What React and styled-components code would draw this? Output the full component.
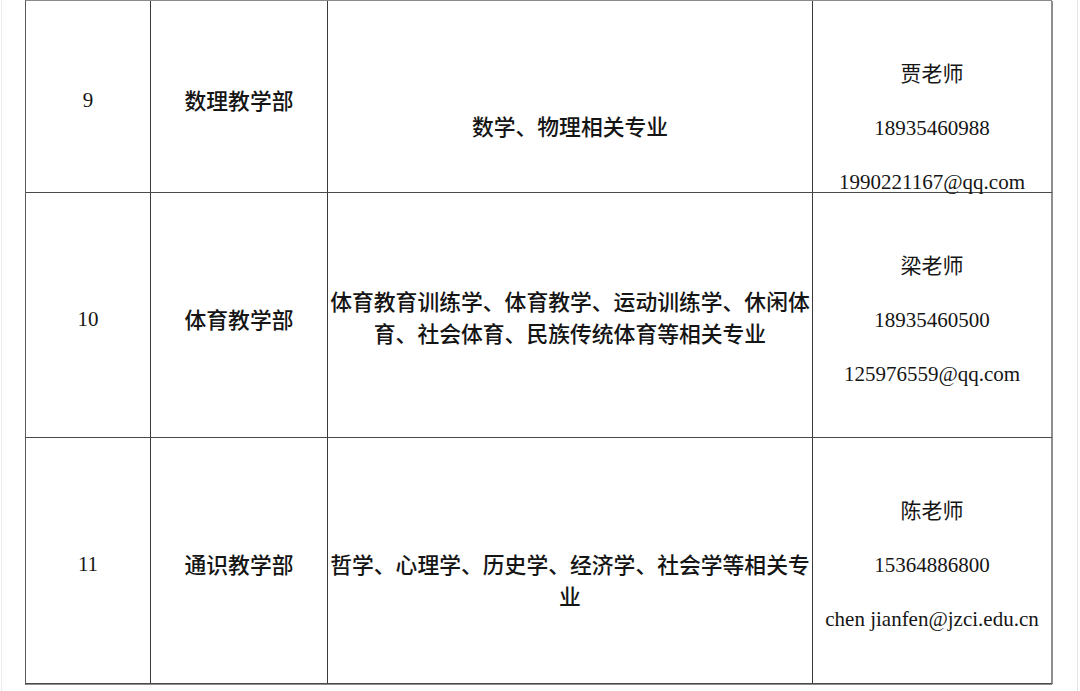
import React from 'react';
import styled, { createGlobalStyle } from 'styled-components';

const GlobalStyle = createGlobalStyle`
  html, body {
    margin: 0;
    padding: 0;
    background: #ffffff;
  }
  body {
    font-family: "Liberation Serif", "Noto Sans CJK SC", serif;
    color: #151515;
  }
`;

const rows = [
  {
    no: '9',
    dept: '数理教学部',
    major: '数学、物理相关专业',
    teacher: '贾老师',
    phone: '18935460988',
    email: '1990221167@qq.com',
    shift: { no: 3, major: 29, contact: 31 },
  },
  {
    no: '10',
    dept: '体育教学部',
    major: '体育教育训练学、体育教学、运动训练学、休闲体育、社会体育、民族传统体育等相关专业',
    teacher: '梁老师',
    phone: '18935460500',
    email: '125976559@qq.com',
    shift: { no: 4, major: 2, contact: 5 },
  },
  {
    no: '11',
    dept: '通识教学部',
    major: '哲学、心理学、历史学、经济学、社会学等相关专业',
    teacher: '陈老师',
    phone: '15364886800',
    email: 'chen jianfen@jzci.edu.cn',
    shift: { no: 3, major: 19, contact: 4 },
  },
];

const heights = [192, 245, 246];

const App = () => {
  return (
    <>
      <GlobalStyle />
      <Page>
        <Sheet>
          <Table>
            {rows.map((row, i) => (
              <React.Fragment key={row.no}>
                <Cell $h={heights[i]} $shift={row.shift.no}>
                  <Num>{row.no}</Num>
                </Cell>
                <Cell $h={heights[i]} $shift={row.shift.no}>
                  <Text>{row.dept}</Text>
                </Cell>
                <Cell $h={heights[i]} $shift={row.shift.major}>
                  <Major>{row.major}</Major>
                </Cell>
                <Cell $h={heights[i]} $shift={row.shift.contact} $last>
                  <Contact>
                    <Line>{row.teacher}</Line>
                    <Line>{row.phone}</Line>
                    <Line>{row.email}</Line>
                  </Contact>
                </Cell>
              </React.Fragment>
            ))}
          </Table>
        </Sheet>
      </Page>
    </>
  );
};

const Page = styled.div`
  width: 1080px;
  height: 691px;
  overflow: hidden;
  background: #ffffff;
  padding-left: 1px;
  box-sizing: border-box;
`;

const Sheet = styled.div`
  width: 1077px;
  height: 691px;
  box-sizing: border-box;
  border-left: 1px solid #ececec;
  border-right: 1px solid #e4e4e4;
  padding-left: 23px;
`;

const Table = styled.div`
  display: grid;
  grid-template-columns: 125px 177px 485px 240px;
  width: 1027px;
  box-sizing: border-box;
  border-left: 1px solid #5a5a5a;
  border-top: 1px solid #8a8a8a;
  border-bottom: 1px solid #8c8c8c;
`;

const Cell = styled.div`
  box-sizing: border-box;
  height: ${(p) => p.$h}px;
  display: flex;
  flex-direction: column;
  align-items: center;
  justify-content: center;
  padding-top: ${(p) => p.$shift * 2}px;
  border-right: ${(p) => (p.$last ? '2px solid #8e8e8e' : '1px solid #3c3c3c')};
  border-bottom: 1px solid #4a4a4a;
  text-align: center;
  overflow: visible;
`;

const Num = styled.span`
  font-size: 21px;
  line-height: 26px;
`;

const Text = styled.span`
  font-family: "Noto Sans CJK SC", sans-serif;
  font-size: 21.8px;
  font-weight: 500;
  line-height: 30px;
`;

const Major = styled.p`
  margin: 0;
  padding: 0 2px;
  font-family: "Noto Sans CJK SC", sans-serif;
  font-size: 21.8px;
  font-weight: 500;
  line-height: 32px;
`;

const Contact = styled.div`
  display: flex;
  flex-direction: column;
  align-items: center;
  flex-shrink: 0;
`;

const Line = styled.span`
  font-size: 21px;
  line-height: 54px;
  white-space: nowrap;
`;

export default App;
